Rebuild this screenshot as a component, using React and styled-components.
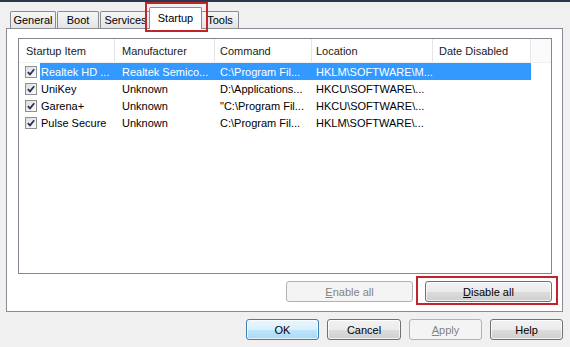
import React from "react";
import styled, { createGlobalStyle, css } from "styled-components";

const Global = createGlobalStyle`
  html, body { margin: 0; padding: 0; background: #f0f0f0; }
  body { font-family: "Liberation Sans", Arial, sans-serif; font-size: 11px; color: #000; }
`;

const Window = styled.div`
  width: 570px;
  height: 347px;
  background: #f0f0f0;
  display: flex;
  flex-direction: column;
  overflow: hidden;
`;

const TopStrip = styled.div`
  height: 2px;
  background: #26384a;
`;

const TabStrip = styled.div`
  position: relative;
  z-index: 1;
  height: 27px;
  display: flex;
  align-items: flex-end;
  gap: 1px;
  padding-left: 10px;
`;

const Tab = styled.div`
  position: relative;
  box-sizing: border-box;
  width: ${(p) => p.$w}px;
  height: 17px;
  margin-bottom: 1px;
  border: 1px solid #898c95;
  border-bottom: none;
  border-radius: 2px 2px 0 0;
  background: linear-gradient(#f6f6f6, #e4e4e4);
  display: flex;
  align-items: center;
  justify-content: center;
  font-size: 11px;
  color: #000;
  ${(p) =>
    p.$active &&
    css`
      height: 22px;
      margin: 0 -2px 0 -3px;
      background: #ffffff;
      align-items: flex-start;
      padding-top: 4px;
      z-index: 2;
    `}
`;

const Highlight = styled.span`
  position: absolute;
  top: ${(p) => p.$t}px;
  right: ${(p) => p.$r}px;
  bottom: ${(p) => p.$b}px;
  left: ${(p) => p.$l}px;
  border: 2px solid #c0242c;
  pointer-events: none;
  z-index: 3;
`;

const Panel = styled.div`
  box-sizing: border-box;
  margin: -1px 0 0 6px;
  width: 557px;
  height: 284px;
  border: 1px solid #898c95;
  background: #ffffff;
  padding: 9px 0 0 11px;
  display: flex;
  flex-direction: column;
`;

const List = styled.div`
  box-sizing: border-box;
  width: 534px;
  height: 236px;
  border: 1px solid #828790;
  background: #fff;
  display: flex;
  flex-direction: column;
`;

const COLS = "21px 75px 100px 97px 121px 98px 1fr";

const Header = styled.div`
  display: grid;
  grid-template-columns: 96px 100px 97px 121px 98px 1fr;
  height: 23px;
  border-bottom: 1px solid #eef0f3;
`;

const HeadCell = styled.div`
  display: flex;
  align-items: center;
  padding-left: ${(p) => p.$pl}px;
  border-right: 1px solid #e3e5e8;
  color: #1a1a1a;
  white-space: nowrap;
  &:last-child { border-right: none; background: #fafafa; }
`;

const Row = styled.div`
  display: grid;
  grid-template-columns: ${COLS};
  height: 17px;
`;

const CheckCell = styled.div`
  display: flex;
  align-items: center;
  padding-left: 6px;
`;

const Cell = styled.div`
  display: flex;
  align-items: center;
  padding-left: ${(p) => p.$pl}px;
  white-space: nowrap;
  overflow: hidden;
  ${(p) =>
    p.$sel &&
    css`
      background: #3399ff;
      color: #fff;
    `}
`;

const Box = styled.span`
  box-sizing: border-box;
  width: 12px;
  height: 12px;
  border: 1px solid #8e8f8f;
  background: linear-gradient(135deg, #dcdcdc, #fdfdfd);
  display: flex;
  align-items: center;
  justify-content: center;
`;

const Check = () => (
  <Box>
    <svg width="8" height="8" viewBox="0 0 8 8">
      <path d="M0.8 4.2 L3 6.4 L7.2 1.2" fill="none" stroke="#22305e" strokeWidth="1.7" />
    </svg>
  </Box>
);

const PanelButtons = styled.div`
  display: flex;
  justify-content: flex-end;
  gap: 12px;
  width: 534px;
  margin-top: 7px;
`;

const Button = styled.button`
  position: relative;
  box-sizing: border-box;
  width: ${(p) => p.$w}px;
  height: 21px;
  padding: 0;
  font-family: "Liberation Sans", Arial, sans-serif;
  font-size: 11px;
  color: #000;
  border: 1px solid #707070;
  border-radius: 3px;
  background: linear-gradient(#f2f2f2 0%, #ebebeb 50%, #dddddd 51%, #cfcfcf 100%);
  box-shadow: inset 0 0 0 1px rgba(255, 255, 255, 0.7);
  ${(p) =>
    p.$default &&
    css`
      border-color: #3c7fb1;
      background: linear-gradient(#eaf6fd 0%, #d9f0fc 50%, #bee6fd 51%, #a7d9f5 100%);
    `}
  ${(p) =>
    p.disabled &&
    css`
      border-color: #adb2b5;
      background: #f4f4f4;
      color: #838383;
      box-shadow: none;
    `}
  u { text-decoration: underline; }
`;

const Footer = styled.div`
  display: flex;
  justify-content: flex-end;
  gap: 8px;
  padding: 7px 7px 0 0;
`;

const rows = [
  ["Realtek HD ...", "Realtek Semico...", "C:\\Program Fil...", "HKLM\\SOFTWARE\\M...", true],
  ["UniKey", "Unknown", "D:\\Applications...", "HKCU\\SOFTWARE\\...", false],
  ["Garena+", "Unknown", "\"C:\\Program Fil...", "HKCU\\SOFTWARE\\...", false],
  ["Pulse Secure", "Unknown", "C:\\Program Fil...", "HKLM\\SOFTWARE\\...", false],
];

export default function App() {
  return (
    <Window>
      <Global />
      <TopStrip />
      <TabStrip>
        <Tab $w={46}>General</Tab>
        <Tab $w={42}>Boot</Tab>
        <Tab $w={51}>Services</Tab>
        <Tab $w={53} $active>
          Startup
          <Highlight $t={-6} $r={-7} $b={-3} $l={-5} />
        </Tab>
        <Tab $w={38}>Tools</Tab>
      </TabStrip>
      <Panel>
        <List>
          <Header>
            <HeadCell $pl={7}>Startup Item</HeadCell>
            <HeadCell $pl={7}>Manufacturer</HeadCell>
            <HeadCell $pl={5}>Command</HeadCell>
            <HeadCell $pl={4}>Location</HeadCell>
            <HeadCell $pl={6}>Date Disabled</HeadCell>
            <HeadCell />
          </Header>
          {rows.map(([name, mfr, cmd, loc, sel]) => (
            <Row key={name}>
              <CheckCell>
                <Check />
              </CheckCell>
              <Cell $pl={1} $sel={sel}>{name}</Cell>
              <Cell $pl={7} $sel={sel}>{mfr}</Cell>
              <Cell $pl={5} $sel={sel}>{cmd}</Cell>
              <Cell $pl={4} $sel={sel}>{loc}</Cell>
              <Cell $pl={6} $sel={sel} />
              <Cell />
            </Row>
          ))}
        </List>
        <PanelButtons>
          <Button $w={127} disabled>
            <u>E</u>nable all
          </Button>
          <Button $w={127}>
            <u>D</u>isable all
            <Highlight $t={-6} $r={-7} $b={-4} $l={-10} />
          </Button>
        </PanelButtons>
      </Panel>
      <Footer>
        <Button $w={73} $default>OK</Button>
        <Button $w={74}>Cancel</Button>
        <Button $w={73} disabled>
          <u>A</u>pply
        </Button>
        <Button $w={73}>Help</Button>
      </Footer>
    </Window>
  );
}
